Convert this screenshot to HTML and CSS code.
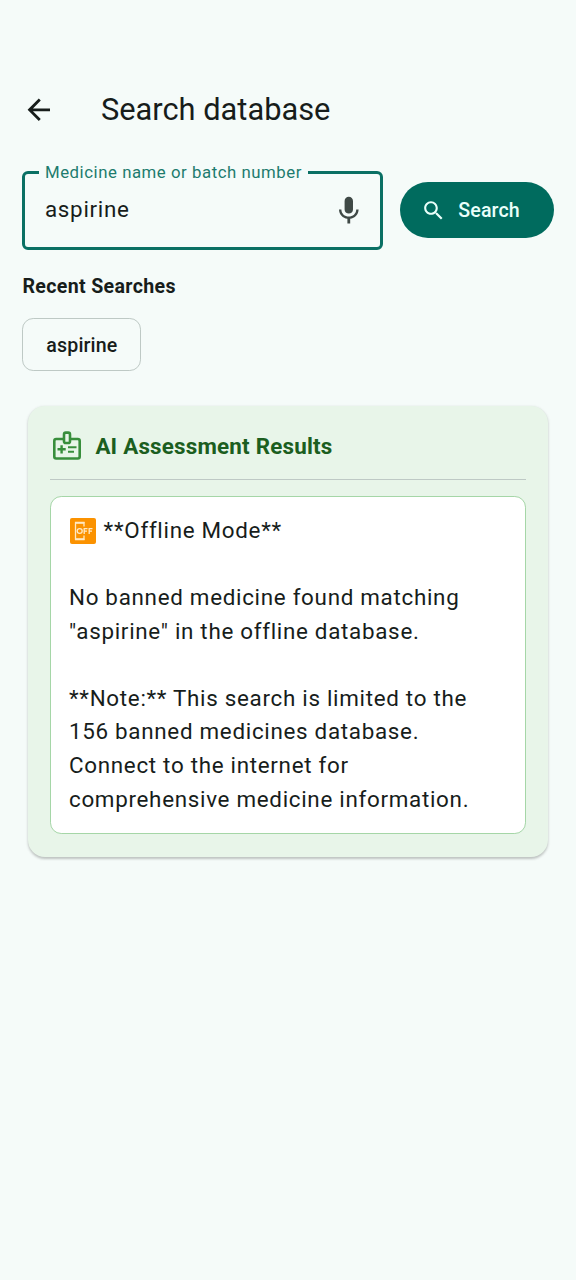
FILE: index.html
```html
<!DOCTYPE html>
<html lang="en">
<head>
<meta charset="utf-8">
<title>Search database</title>
<link rel="stylesheet" href="styles.css">
</head>
<body>
<header class="app-bar">
  <svg class="back-icon" viewBox="0 0 24 24"><path d="M20 11H7.83l5.59-5.59L12 4l-8 8 8 8 1.41-1.41L7.83 13H20v-2z"/></svg>
  <h1 class="title">Search database</h1>
</header>
<main class="content">
  <div class="search-row">
    <fieldset class="field">
      <legend class="field-label"><span>Medicine name or batch number</span></legend>
      <div class="field-body">
        <span class="field-value">aspirine</span>
        <svg class="mic-icon" viewBox="0 0 24 24"><path d="M12 14c1.66 0 2.99-1.34 2.99-3L15 5c0-1.66-1.34-3-3-3S9 3.34 9 5v6c0 1.66 1.34 3 3 3zm5.3-3c0 3-2.54 5.1-5.3 5.1S6.7 14 6.7 11H5c0 3.41 2.72 6.23 6 6.72V21h2v-3.28c3.28-.48 6-3.3 6-6.72h-1.7z"/></svg>
      </div>
    </fieldset>
    <button class="search-button">
      <svg class="search-icon" viewBox="0 0 24 24"><path d="M15.5 14h-.79l-.28-.27C15.41 12.59 16 11.11 16 9.5 16 5.91 13.09 3 9.5 3S3 5.91 3 9.5 5.91 16 9.5 16c1.61 0 3.09-.59 4.23-1.57l.27.28v.79l5 4.99L20.49 19l-4.99-5zm-6 0C7.01 14 5 11.99 5 9.5S7.01 5 9.5 5 14 7.01 14 9.5 11.99 14 9.5 14z"/></svg>
      <span class="search-text">Search</span>
    </button>
  </div>
  <h2 class="recent-title">Recent Searches</h2>
  <button class="chip">aspirine</button>
  <section class="card">
    <div class="card-header">
      <svg class="badge-icon" viewBox="0 0 30 30" fill="none" stroke="#388e3c" stroke-width="2.6">
        <path d="M11.5 8H4.2Q2.3 8 2.3 10V25.6Q2.3 27.5 4.2 27.5H25.8Q27.7 27.5 27.7 25.6V10Q27.7 8 25.8 8H18.5"/>
        <rect x="12" y="1.6" width="6" height="10.4" rx="1.8"/>
        <path d="M5.5 18.3H13.7M9.6 14.2V22.4" stroke-width="2.4"/>
        <path d="M16 16.2H24.5M16 20.8H22" stroke-width="1.9"/>
      </svg>
      <h3 class="card-title">AI Assessment Results</h3>
    </div>
    <div class="result">
      <p class="line"><svg class="off-icon" viewBox="0 0 26 26"><rect width="26" height="26" rx="2" fill="#fb9200"/><g fill="none" stroke="#ffe9c4" stroke-width="1.3"><path d="M14 8.5V5H5.5V21H14V17.5"/><path d="M5 4.5H14.6M5 21.5H14.6"/><ellipse cx="9.7" cy="13" rx="2.5" ry="2.4"/><path d="M14.2 16V10.7H17.5M14.2 13.2H17M19.2 16V10.7H22.5M19.2 13.2H22"/></g></svg> **Offline Mode**</p>
      <p class="line">No banned medicine found matching<br>"aspirine" in the offline database.</p>
      <p class="line">**Note:** This search is limited to the<br>156 banned medicines database.<br>Connect to the internet for<br>comprehensive medicine information.</p>
    </div>
  </section>
</main>
</body>
</html>
```
FILE: styles.css
```css
* { box-sizing: border-box; }
body {
  margin: 0;
  min-height: 1280px;
  background: #f5fbf9;
  color: #171d1b;
  font-family: Roboto, sans-serif;
}
h1, h2, h3, p { margin: 0; }
.app-bar {
  display: flex;
  align-items: center;
  gap: 45px;
  height: 78px;
  margin-top: 70px;
  padding-left: 22.4px;
}
.back-icon { width: 33.6px; height: 33.6px; margin-top: 1.4px; fill: #171d1b; }
.title { padding-top: 1px; font-size: 30.8px; font-weight: 400; line-height: 40px; }
.content { padding: 14px 22.4px 0; }
.search-row { display: flex; align-items: flex-start; gap: 17px; }
.field {
  width: 360.5px;
  height: 87.5px;
  margin: 0;
  padding: 0 18px 0 13.6px;
  border: 3px solid #0a7064;
  border-radius: 6px;
}
.field-label {
  padding: 0 6px;
  color: #1d7b6e;
  font-size: 16.8px;
  line-height: 20px;
  letter-spacing: .54px;
}
.field-body {
  display: flex;
  align-items: center;
  justify-content: space-between;
  height: 54px;
  padding-left: 6px;
}
.field-value { font-size: 22.4px; line-height: 32px; letter-spacing: .7px; }
.mic-icon { width: 33.6px; height: 33.6px; margin: 3px -4px 0 0; fill: #3f4946; }
.search-button {
  display: flex;
  align-items: center;
  gap: 11.6px;
  width: 154px;
  height: 56px;
  margin-top: 20.3px;
  padding: 0 0 0 21.8px;
  border: 0;
  border-radius: 28px;
  background: #006b5e;
  color: #e9fffa;
  font: 500 19.6px/28px Roboto, sans-serif;
  letter-spacing: .14px;
}
.search-text { padding-top: 1px; }
.search-icon { width: 25.2px; height: 25.2px; fill: #e9fffa; }
.recent-title {
  margin-top: 23px;
  font-size: 19.6px;
  font-weight: 700;
  line-height: 28px;
  letter-spacing: .34px;
}
.chip {
  display: block;
  width: 119px;
  height: 53px;
  margin-top: 17.5px;
  padding: 2px 0 0;
  border: 1.4px solid #bec9c5;
  border-radius: 11.2px;
  background: transparent;
  color: #171d1b;
  font: 500 19.6px/28px Roboto, sans-serif;
  letter-spacing: .14px;
}
.card {
  height: 451px;
  margin: 35.3px 5.6px 0;
  padding: 22.4px;
  border-radius: 17px;
  background: #e8f5e9;
  box-shadow: 0 1.4px 2.4px rgba(0, 0, 0, .2), 0 1px 4px rgba(0, 0, 0, .05);
}
.card-header {
  display: flex;
  align-items: flex-start;
  gap: 13px;
  height: 51px;
  padding-left: 2px;
  border-bottom: 1.4px solid #bec9c5;
}
.badge-icon { width: 30px; height: 30px; margin-top: 2.4px; }
.card-title {
  color: #1b5e20;
  font-size: 22.4px;
  font-weight: 700;
  line-height: 34px;
  letter-spacing: .2px;
}
.result {
  height: 338px;
  margin-top: 16.3px;
  padding: 16.8px 17.6px;
  border: 1.4px solid #a5d6a7;
  border-radius: 11.2px;
  background: #fff;
}
.line {
  margin-bottom: 33.6px;
  font-size: 22.4px;
  line-height: 33.6px;
  letter-spacing: .7px;
  white-space: nowrap;
}
.off-icon { width: 26px; height: 26px; margin: 0 1.4px 0 1px; vertical-align: -6px; }
```
